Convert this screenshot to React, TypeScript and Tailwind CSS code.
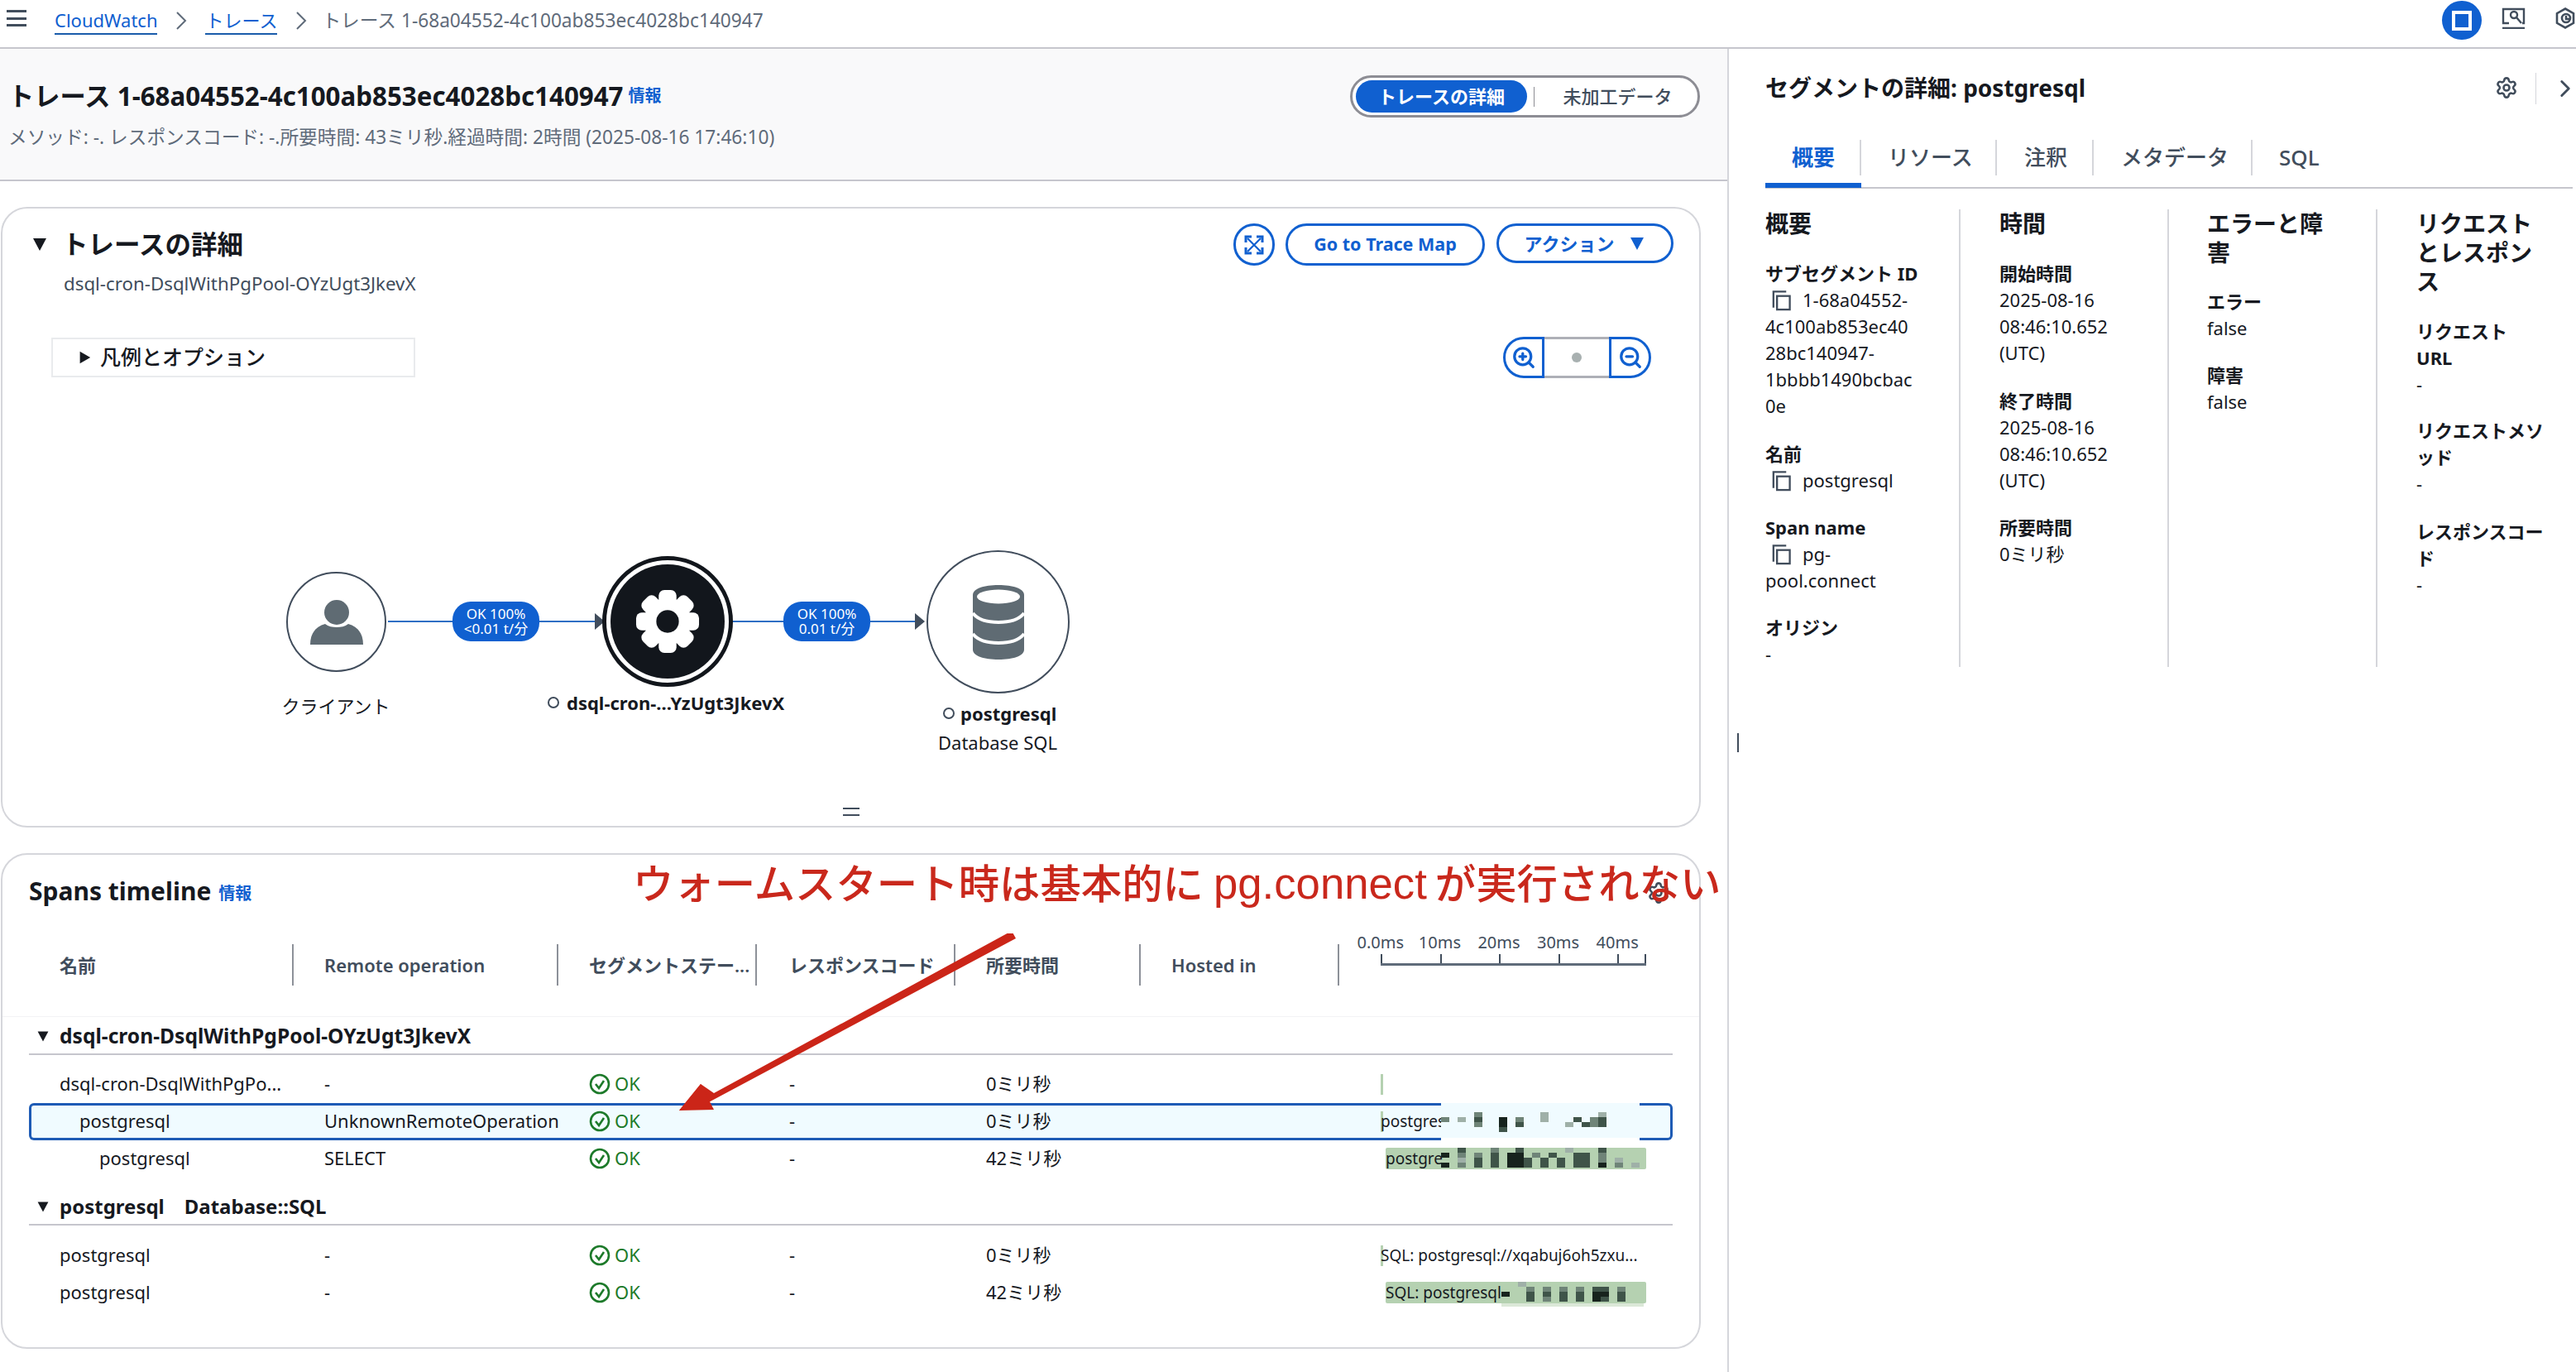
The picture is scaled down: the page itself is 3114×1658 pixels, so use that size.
import { Settings, ChevronRight, ZoomIn, ZoomOut } from "lucide-react";

// ─── Small pieces ─────────────────────────────────────────

function Caret({ dir = "down", className }: { dir?: "down" | "right"; className: string }) {
  return (
    <svg viewBox="0 0 20 20" className={className} fill="currentColor">
      <polygon points={dir === "down" ? "2,3 18,3 10,18" : "4,2 18,10 4,18"} />
    </svg>
  );
}

function Chevron() {
  return (
    <svg viewBox="0 0 14 24" className="h-[24px] w-[14px] text-[#5f6b7a]" fill="none" stroke="currentColor" strokeWidth="2">
      <path d="M2 2l10 10L2 22" />
    </svg>
  );
}

function CopyIcon() {
  return (
    <svg viewBox="0 0 28 26" className="ml-[5px] mr-[13px] inline-block h-[26px] w-[27px] align-[-5px] text-[#414d5c]" fill="none" stroke="currentColor" strokeWidth="2.4">
      <path d="M5 22V2h16" />
      <rect x="9.5" y="7.5" width="16" height="17" />
    </svg>
  );
}

function OkIcon() {
  return (
    <svg viewBox="0 0 26 26" className="h-[26px] w-[26px] text-[#1d7a2a]" fill="none" stroke="currentColor" strokeWidth="2.6">
      <circle cx="13" cy="13" r="11" />
      <path d="M8 13l4 5 6-9" />
    </svg>
  );
}

function Info() {
  return <span className="text-[20px] font-semibold text-[#1060d0]">情報</span>;
}

// pixelated (blurred out) text, one string per row of 10px cells
const SHADES: Record<string, string> = {
  "1": "#9fb0a8",
  "2": "#6f8478",
  "3": "#3f5449",
  "4": "#17231d",
};

function Mosaic({ rows, className }: { rows: string[]; className: string }) {
  return (
    <svg viewBox={`0 0 ${rows[0].length * 10} ${rows.length * 8}`} preserveAspectRatio="none" className={className}>
      {rows.map((row, y) =>
        row.split("").map((c, x) =>
          SHADES[c] ? <rect key={`${x}-${y}`} x={x * 10} y={y * 8} width="10" height="8" fill={SHADES[c]} /> : null,
        ),
      )}
    </svg>
  );
}

// ─── Top bar ──────────────────────────────────────────────

function TopBar() {
  return (
    <div className="flex h-[59px] shrink-0 items-start border-b-2 border-[#c6c6cd] bg-white">
      <div className="ml-[8px] mt-[12px] flex h-[20px] w-[24px] flex-col justify-between">
        <div className="h-[3px] bg-[#414d5c]" />
        <div className="h-[3px] bg-[#414d5c]" />
        <div className="h-[3px] bg-[#414d5c]" />
      </div>
      <div className="ml-[34px] mt-[8px] flex items-center text-[22px] leading-[32px] text-[#5f6b7a]">
        <span className="border-b-2 border-[#1a5cab] text-[#1060d0]">CloudWatch</span>
        <span className="mx-[22px]"><Chevron /></span>
        <span className="border-b-2 border-[#1a5cab] text-[#1060d0]">トレース</span>
        <span className="ml-[22px] mr-[18px]"><Chevron /></span>
        <span className="text-[22.7px]">トレース 1-68a04552-4c100ab853ec4028bc140947</span>
      </div>
      <div className="ml-auto flex items-start">
        <div className="mt-[1px] flex h-[47px] w-[48px] items-center justify-center rounded-full bg-[#1060d0]">
          <div className="h-[24px] w-[24px] border-[4px] border-white" />
        </div>
        <svg viewBox="0 0 30 26" className="ml-[23px] mt-[9px] h-[26px] w-[30px] text-[#414d5c]" fill="none" stroke="currentColor" strokeWidth="2.4">
          <path d="M10 19H3V2h25v17h-2M2 25h27" />
          <circle cx="16" cy="9" r="4" />
          <path d="M19 12l6 7" />
        </svg>
        <svg viewBox="0 0 26 26" className="ml-[35px] mt-[9px] h-[26px] w-[26px] text-[#414d5c]" fill="none" stroke="currentColor" strokeWidth="2.6">
          <path d="M13 1.5l10 5.7v11.6l-10 5.7-10-5.7V7.2z" />
          <circle cx="14" cy="13" r="5" />
          <path d="M14 10v4h4" />
        </svg>
      </div>
    </div>
  );
}

// ─── Trace map ────────────────────────────────────────────

function EdgePill({ top, bottom, x }: { top: string; bottom: string; x: string }) {
  return (
    <div className={`absolute top-[87px] flex h-[48px] w-[105px] flex-col items-center justify-center rounded-[22px] bg-[#1060d0] text-[17px] leading-[18px] text-white ${x}`}>
      <span>{top}</span>
      <span>{bottom}</span>
    </div>
  );
}

function TraceMap() {
  return (
    <div className="relative mt-[183px] h-[358px]">
      {/* edges */}
      <div className="absolute left-[466px] top-[110px] h-[2px] w-[250px] bg-[#2f6fc4]" />
      <svg viewBox="0 0 12 20" className="absolute left-[716px] top-[101px] h-[20px] w-[12px] text-[#414d5c]" fill="currentColor"><polygon points="0,0 12,10 0,20" /></svg>
      <div className="absolute left-[882px] top-[110px] h-[2px] w-[222px] bg-[#2f6fc4]" />
      <svg viewBox="0 0 12 20" className="absolute left-[1103px] top-[101px] h-[20px] w-[12px] text-[#414d5c]" fill="currentColor"><polygon points="0,0 12,10 0,20" /></svg>
      <EdgePill x="left-[544px]" top="OK 100%" bottom="<0.01 t/分" />
      <EdgePill x="left-[944px]" top="OK 100%" bottom="0.01 t/分" />

      {/* client */}
      <div className="absolute left-[343px] top-[51px] flex h-[121px] w-[121px] items-center justify-center rounded-full border-2 border-[#414d5c] bg-white">
        <svg viewBox="0 0 64 54" className="h-[54px] w-[64px] text-[#5f6b73]" fill="currentColor">
          <ellipse cx="32" cy="15" rx="15" ry="15" />
          <path d="M0 54c0-14 7-22 18-25 4 3 9 4 14 4s10-1 14-4c11 3 18 11 18 25z" />
        </svg>
      </div>
      <div className="absolute left-[283px] top-[198px] w-[240px] text-center text-[22px] leading-[30px] text-[#16191f]">クライアント</div>

      {/* service */}
      <div className="absolute left-[725px] top-[32px] flex h-[158px] w-[158px] items-center justify-center rounded-full border-[5px] border-[#12161c] bg-white">
        <div className="flex h-[138px] w-[138px] items-center justify-center rounded-full bg-[#12161c]">
          <svg viewBox="-40 -40 80 80" className="h-[78px] w-[78px]" fill="#ffffff">
            {[0, 45, 90, 135, 180, 225, 270, 315].map((a) => (
              <rect key={a} x="-11" y="-39" width="22" height="20" rx="7" transform={`rotate(${a})`} />
            ))}
            <circle r="29" />
            <circle r="14" fill="#12161c" />
          </svg>
        </div>
      </div>
      <div className="absolute left-[659px] top-[194px] flex items-center text-[22px] font-bold leading-[30px] text-[#16191f]">
        <span className="mr-[9px] h-[14px] w-[14px] rounded-full border-2 border-[#414d5c]" />
        dsql-cron-...YzUgt3JkevX
      </div>

      {/* database */}
      <div className="absolute left-[1117px] top-[25px] flex h-[173px] w-[173px] items-center justify-center rounded-full border-2 border-[#414d5c] bg-white">
        <svg viewBox="0 0 62 90" className="h-[90px] w-[62px] text-[#5f6b73]" fill="currentColor">
          <path d="M0 12C0 4 14 0 31 0s31 4 31 12v66c0 8-14 12-31 12S0 86 0 78z" />
          <ellipse cx="31" cy="14" rx="26" ry="8.5" fill="#ffffff" />
          <path d="M0 34c6 8 18 11 31 11s25-3 31-11" fill="none" stroke="#ffffff" strokeWidth="4" />
          <path d="M0 59c6 8 18 11 31 11s25-3 31-11" fill="none" stroke="#ffffff" strokeWidth="4" />
        </svg>
      </div>
      <div className="absolute left-[1137px] top-[207px] flex items-center text-[22px] font-bold leading-[30px] text-[#16191f]">
        <span className="mr-[7px] h-[14px] w-[14px] rounded-full border-2 border-[#414d5c]" />
        postgresql
      </div>
      <div className="absolute left-[1083px] top-[242px] w-[240px] text-center text-[22px] leading-[30px] text-[#16191f]">Database SQL</div>

      {/* resize handle */}
      <div className="absolute left-[1016px] top-[336px] flex h-[10px] w-[20px] flex-col justify-between">
        <div className="h-[2px] bg-[#414d5c]" />
        <div className="h-[2px] bg-[#414d5c]" />
      </div>
    </div>
  );
}

function TraceDetailCard() {
  return (
    <div className="mx-[1px] mt-[31px] h-[750px] w-[2055px] rounded-[32px] border-2 border-[#d5d6db] bg-white">
      <div className="flex items-start justify-between pl-[35px] pr-[31px] pt-[18px]">
        <div className="pt-[3px]">
          <div className="flex items-center text-[31.5px] font-bold leading-[44px] text-[#16191f]">
            <Caret className="mr-[17px] h-[20px] w-[20px]" />
            トレースの詳細
          </div>
          <div className="ml-[39px] mt-[11px] text-[22.3px] leading-[30px] text-[#414d5c]">dsql-cron-DsqlWithPgPool-OYzUgt3JkevX</div>
        </div>
        <div className="flex items-start">
          <button className="flex h-[51px] w-[50px] items-center justify-center rounded-full border-[3px] border-[#1060d0] text-[#1060d0]">
            <svg viewBox="0 0 24 24" className="h-[24px] w-[24px]" fill="none" stroke="currentColor" strokeWidth="3">
              <path d="M2 9V2h7M15 2h7v7M22 15v7h-7M9 22H2v-7" />
              <path d="M4 4l16 16M20 4L4 20" strokeWidth="2.2" />
            </svg>
          </button>
          <button className="ml-[13px] h-[51px] w-[241px] rounded-full border-[3px] border-[#1060d0] text-[21.5px] font-bold text-[#1060d0]">Go to Trace Map</button>
          <button className="ml-[14px] flex h-[48px] w-[214px] items-center justify-center rounded-full border-[3px] border-[#1060d0] text-[22px] font-semibold text-[#1060d0]">
            アクション
            <Caret className="ml-[18px] h-[20px] w-[20px]" />
          </button>
        </div>
      </div>

      <div className="mt-[49px] flex items-start justify-between pl-[59px] pr-[58px]">
        <div className="mt-[1px] flex h-[48px] w-[440px] items-center border-2 border-[#e9ebed] pl-[29px] text-[25px] font-medium text-[#16191f]">
          <Caret dir="right" className="mr-[10px] h-[18px] w-[18px]" />
          凡例とオプション
        </div>
        <div className="flex h-[50px] w-[179px] text-[#1060d0]">
          <div className="flex w-[50px] items-center justify-center rounded-l-full border-[3px] border-[#1060d0]">
            <ZoomIn className="h-[30px] w-[30px]" strokeWidth={2.6} />
          </div>
          <div className="flex flex-1 items-center justify-center border-y-[3px] border-[#aeb0b7]">
            <div className="h-[12px] w-[12px] rounded-full bg-[#a8b0b0]" />
          </div>
          <div className="flex w-[51px] items-center justify-center rounded-r-full border-[3px] border-[#1060d0]">
            <ZoomOut className="h-[30px] w-[30px]" strokeWidth={2.6} />
          </div>
        </div>
      </div>

      <TraceMap />
    </div>
  );
}

// ─── Spans timeline ───────────────────────────────────────

const HEADERS = [
  { label: "名前", cls: "w-[320px] pl-[37px]" },
  { label: "Remote operation", cls: "w-[320px] pl-[37px]" },
  { label: "セグメントステー...", cls: "w-[240px] pl-[37px]" },
  { label: "レスポンスコード", cls: "w-[240px] pl-[39px]" },
  { label: "所要時間", cls: "w-[224px] pl-[37px]" },
  { label: "Hosted in", cls: "w-[240px] pl-[37px]" },
];

function HeaderRow() {
  return (
    <div className="ml-[32px] mt-[42px] flex h-[50px]">
      {HEADERS.map((h) => (
        <div key={h.label} className={`flex items-center whitespace-nowrap border-r-2 border-[#8d9199] text-[22px] font-semibold text-[#414d5c] ${h.cls}`}>
          {h.label}
        </div>
      ))}
      <div className="relative ml-[50px] w-[321px]">
        <div className="-ml-[36px] -mt-[15px] flex text-center text-[20px] leading-[26px] text-[#414d5c]">
          {["0.0ms", "10ms", "20ms", "30ms", "40ms"].map((t) => (
            <span key={t} className="w-[71.6px] shrink-0">{t}</span>
          ))}
        </div>
        <div className="mt-[1px] flex border-b-[3px] border-[#5f6b7a]">
          {[0, 1, 2, 3].map((i) => (
            <div key={i} className="h-[11px] w-[71.6px] border-l-2 border-[#414d5c]" />
          ))}
          <div className="h-[11px] flex-1 border-x-2 border-[#414d5c]" />
        </div>
      </div>
    </div>
  );
}

function Bar() {
  return <div className="absolute left-0 top-[10px] h-[25px] w-[3px] bg-[#b5d1b1]" />;
}

interface RowProps {
  name: string;
  indent: string;
  op: string;
  dur: string;
  selected?: boolean;
  children?: React.ReactNode;
}

function SpanRow({ name, indent, op, dur, selected, children }: RowProps) {
  return (
    <div
      className={
        selected
          ? "ml-[32px] grid h-[45px] w-[1987px] grid-cols-[357px_320px_242px_238px_477px_1fr] items-center rounded-[6px] bg-[#f0fbff] text-[22px] text-[#16191f] shadow-[inset_0_0_0_3px_#1e5bb5]"
          : "ml-[32px] grid h-[45px] w-[1987px] grid-cols-[357px_320px_242px_238px_477px_1fr] items-center text-[22px] text-[#16191f]"
      }
    >
      <div className={`-mt-[2px] whitespace-nowrap ${indent}`}>{name}</div>
      <div className="-mt-[2px] whitespace-nowrap">{op}</div>
      <div className="-mt-[2px] flex items-center gap-[5px] text-[#1d7a2a]">
        <OkIcon />
        OK
      </div>
      <div className="-mt-[2px]">-</div>
      <div className="-mt-[2px]">{dur}</div>
      <div className="relative h-[45px] text-[19px] leading-[45px]">{children}</div>
    </div>
  );
}

function SpansCard() {
  return (
    <div className="relative mx-[1px] mt-[31px] h-[599px] w-[2055px] rounded-[32px] border-2 border-[#d5d6db] bg-white">
      <div className="box-content flex h-[44px] items-center pl-[32px] pt-[22px]">
        <span className="text-[30px] font-bold leading-[44px] text-[#16191f]">Spans timeline</span>
        <span className="ml-[9px] mt-[6px]"><Info /></span>
      </div>
      <Settings className="absolute left-[1988px] top-[32px] h-[28px] w-[28px] text-[#414d5c]" strokeWidth={2.2} />

      <HeaderRow />
      <div className="mt-[37px] h-px bg-[#f3f3f5]" />

      <div className="ml-[32px] mt-[2px] flex h-[44px] w-[1987px] items-center border-b-2 border-[#c6c6cd] text-[24.6px] font-bold text-[#16191f]">
        <Caret className="ml-[9px] mr-[12px] h-[16px] w-[16px]" />
        dsql-cron-DsqlWithPgPool-OYzUgt3JkevX
      </div>
      <div className="mt-[13px]">
        <SpanRow name="dsql-cron-DsqlWithPgPo..." indent="pl-[37px]" op="-" dur="0ミリ秒"><Bar /></SpanRow>
        <SpanRow name="postgresql" indent="pl-[61px]" op="UnknownRemoteOperation" dur="0ミリ秒" selected>
          <Bar />
          <span className="absolute left-0 top-0 whitespace-nowrap">postgres</span>
          <div className="absolute left-[73px] top-0 h-[48px] w-[240px] bg-[linear-gradient(#f0fbff_42px,#ffffff_42px)]">
            <Mosaic
              className="absolute left-0 top-[11px] h-[24px] w-[210px]"
              rows={["....2.......1......1.", "2.1.3..4.2..1...3.23.", "....2..4.3.....1.323.", ".......3............."]}
            />
          </div>
        </SpanRow>
        <SpanRow name="postgresql" indent="pl-[85px]" op="SELECT" dur="42ミリ秒">
          <div className="absolute left-[6px] right-[32px] top-[9px] h-[26px] rounded-[2px] bg-[#b5d1b1]" />
          <span className="absolute left-[6px] top-0 whitespace-nowrap">postgre</span>
          <Mosaic
            className="absolute left-[73px] top-[9px] h-[24px] w-[240px]"
            rows={["..3...2..3.....1...3....", "4.2.2.3.44.2.3..33.2....", "..1.3.3.443.3.3.33.2.1..", "4.2.3.3.443.3.3.33.4.2.1"]}
          />
        </SpanRow>
      </div>

      <div className="ml-[32px] mt-[14px] flex h-[44px] w-[1987px] items-center border-b-2 border-[#c6c6cd] text-[24px] font-bold text-[#16191f]">
        <Caret className="ml-[9px] mr-[12px] h-[16px] w-[16px]" />
        postgresql
        <span className="ml-[24px]">Database::SQL</span>
      </div>
      <div className="mt-[14px]">
        <SpanRow name="postgresql" indent="pl-[37px]" op="-" dur="0ミリ秒">
          <Bar />
          <span className="absolute left-0 top-0 whitespace-nowrap">SQL: postgresql://xqabuj6oh5zxu...</span>
        </SpanRow>
        <SpanRow name="postgresql" indent="pl-[37px]" op="-" dur="42ミリ秒">
          <div className="absolute left-[6px] right-[32px] top-[9px] h-[26px] rounded-[2px] bg-[#b5d1b1]" />
          <span className="absolute left-[6px] top-0 whitespace-nowrap">SQL: postgresql</span>
          <div className="absolute left-[146px] top-[9px] h-[30px] w-[172px] bg-[linear-gradient(#b5d1b1_26px,#dbe8d8_26px)]">
            <Mosaic
              className="absolute left-0 top-0 h-[24px] w-[170px]"
              rows={["..1..............", "...2.2.2.2.33.2..", "4..3.3.3.3.44.3..", "...3.2.3.3.43.3.."]}
            />
          </div>
        </SpanRow>
      </div>
    </div>
  );
}

// ─── Right panel ──────────────────────────────────────────

function Field({ label, children, className }: { label: React.ReactNode; children: React.ReactNode; className?: string }) {
  return (
    <div className={className}>
      <div className="font-bold text-[#16191f]">{label}</div>
      <div className="text-[#16191f]">{children}</div>
    </div>
  );
}

function SegmentPanel() {
  const tabs = [
    { label: "リソース", cls: "w-[164px] pl-[32px]" },
    { label: "注釈", cls: "w-[117px] pl-[33px]" },
    { label: "メタデータ", cls: "w-[192px] pl-[33px]" },
    { label: "SQL", cls: "pl-[32px]" },
  ];
  return (
    <div className="w-[1026px] border-l-2 border-[#d5d6db] pl-[44px]">
      <div className="flex h-[110px] items-start pt-[27px]">
        <span className="text-[28px] font-bold leading-[40px] text-[#16191f]">セグメントの詳細: postgresql</span>
        <Settings className="ml-auto mt-[6px] h-[28px] w-[28px] text-[#414d5c]" strokeWidth={2.2} />
        <div className="ml-[21px] mt-[2px] h-[38px] w-px bg-[#d5d6db]" />
        <ChevronRight className="-mr-[4px] ml-[18px] mt-[4px] h-[34px] w-[34px] shrink-0 text-[#414d5c]" strokeWidth={2} />
      </div>

      <div className="flex h-[59px] w-[976px] border-b-2 border-[#c6c6cd] text-[26px] text-[#414d5c]">
        <div className="h-[58px] w-[116px] border-b-[6px] border-[#1060d0]">
          <div className="h-[43px] border-r-2 border-[#d5d6db] pl-[32px] font-semibold leading-[43px] text-[#1060d0]">概要</div>
        </div>
        {tabs.map((t) => (
          <div key={t.label} className={`h-[43px] whitespace-nowrap border-r-2 border-[#d5d6db] font-medium leading-[43px] last:border-r-0 ${t.cls}`}>
            {t.label}
          </div>
        ))}
      </div>

      <div className="mt-[25px] grid h-[553px] grid-cols-[236px_252px_252px_1fr] text-[22px] leading-[32px]">
        <div className="border-r-2 border-[#d5d6db]">
          <div className="mb-[26px] text-[28px] font-bold leading-[35px] text-[#16191f]">概要</div>
          <Field label="サブセグメント ID">
            <CopyIcon />
            1-68a04552-<br />4c100ab853ec40<br />28bc140947-<br />1bbbb1490bcbac<br />0e
          </Field>
          <Field label="名前" className="mt-[26px]"><CopyIcon />postgresql</Field>
          <Field label="Span name" className="mt-[25px]"><CopyIcon />pg-<br />pool.connect</Field>
          <Field label="オリジン" className="mt-[25px]">-</Field>
        </div>
        <div className="border-r-2 border-[#d5d6db] pl-[47px]">
          <div className="mb-[26px] text-[28px] font-bold leading-[35px] text-[#16191f]">時間</div>
          <Field label="開始時間">2025-08-16<br />08:46:10.652<br />(UTC)</Field>
          <Field label="終了時間" className="mt-[26px]">2025-08-16<br />08:46:10.652<br />(UTC)</Field>
          <Field label="所要時間" className="mt-[25px]">0ミリ秒</Field>
        </div>
        <div className="border-r-2 border-[#d5d6db] pl-[46px]">
          <div className="mb-[25px] text-[28px] font-bold leading-[35px] text-[#16191f]">エラーと障<br />害</div>
          <Field label="エラー">false</Field>
          <Field label="障害" className="mt-[25px]">false</Field>
        </div>
        <div className="pl-[47px]">
          <div className="mb-[26px] text-[28px] font-bold leading-[35px] text-[#16191f]">リクエスト<br />とレスポン<br />ス</div>
          <Field label={<>リクエスト<br />URL</>}>-</Field>
          <Field label={<>リクエストメソ<br />ッド</>} className="mt-[24px]">-</Field>
          <Field label={<>レスポンスコー<br />ド</>} className="mt-[26px]">-</Field>
        </div>
      </div>
    </div>
  );
}

// ─── Page ─────────────────────────────────────────────────

export default function App() {
  return (
    <div className="relative flex h-[1658px] w-[3114px] flex-col overflow-hidden bg-white [font-family:'Noto_Sans','Noto_Sans_CJK_JP',sans-serif]">
      <TopBar />
      <div className="flex flex-1">
        <div className="w-[2088px]">
          <div className="flex h-[160px] items-start justify-between border-b-2 border-[#c6c6cd] bg-[#f9f9fa]">
            <div className="pl-[10px] pt-[35px]">
              <div className="flex items-center">
                <span className="text-[31.3px] font-bold leading-[44px] text-[#16191f]">トレース 1-68a04552-4c100ab853ec4028bc140947</span>
                <span className="ml-[6px]"><Info /></span>
              </div>
              <div className="mt-[13px] text-[22.7px] leading-[30px] text-[#5f6b7a]">メソッド: -. レスポンスコード: -.所要時間: 43ミリ秒.経過時間: 2時間 (2025-08-16 17:46:10)</div>
            </div>
            <div className="mr-[33px] mt-[32px] flex h-[51px] w-[423px] items-center rounded-full border-[3px] border-[#8d8d94] bg-white px-[4px] text-[22px]">
              <div className="flex h-[39px] w-[207px] items-center justify-center rounded-full bg-[#1060d0] font-semibold text-white">トレースの詳細</div>
              <div className="mx-[8px] h-[24px] w-px bg-[#8d8d94]" />
              <div className="flex flex-1 items-center justify-center font-medium text-[#414d5c]">未加工データ</div>
            </div>
          </div>
          <TraceDetailCard />
          <SpansCard />
        </div>
        <SegmentPanel />
      </div>

      {/* splitter cursor */}
      <div className="absolute left-[2100px] top-[886px] h-[23px] w-[2px] bg-[#414d5c]" />

      {/* annotation over the screenshot */}
      <div className="absolute left-[765px] top-[1034px] flex items-baseline whitespace-nowrap text-[49.4px] font-medium leading-[68px] text-[#c9281c] [font-family:'Liberation_Sans','Noto_Sans_CJK_JP',sans-serif]">
        <span>ウォームスタート時は基本的に</span>
        <span className="ml-[12px] text-[52.7px]">pg.connect</span>
        <span className="ml-[10px]">が実行されない</span>
      </div>
      <svg viewBox="0 0 420 220" className="absolute left-[815px] top-[1128px] h-[220px] w-[420px]" fill="#cb2518">
        <polygon points="413,6 38,206 6,214 32,182 48,193 408,-3" />
        <polygon points="6,214 32,182 48,213" />
      </svg>
    </div>
  );
}
